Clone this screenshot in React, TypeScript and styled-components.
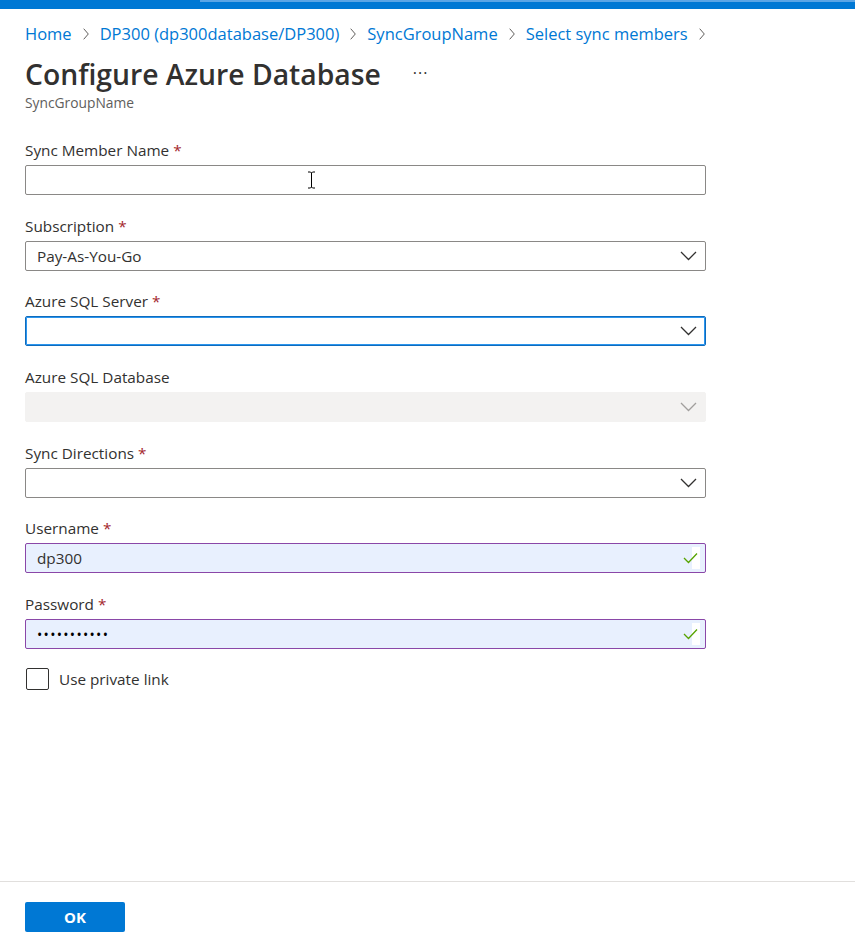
import React from "react";
import styled, { createGlobalStyle, css } from "styled-components";

const Global = createGlobalStyle`
  html, body { margin: 0; padding: 0; background: #fff; }
  body { font-family: "Segoe UI", "Open Sans", "Noto Sans", sans-serif; color: #323130; }
  * { box-sizing: border-box; }
`;

const Page = styled.div`
  min-height: 100vh;
  display: flex;
  flex-direction: column;
`;

const TopBar = styled.div`
  height: 9px;
  background: #0078d4;
  position: relative;
`;

const Progress = styled.div`
  position: absolute;
  left: 200px;
  right: 0;
  top: 0;
  height: 2px;
  background: #5aa5e6;
`;

const Main = styled.div`
  flex: 1;
  padding: 0 25px;
`;

const Crumbs = styled.nav`
  margin-top: 14px;
  height: 22px;
  display: flex;
  align-items: center;
  gap: 11px;
  font-size: 16.5px;
  line-height: 22px;
`;

const Crumb = styled.a`
  color: #0078d4;
  text-decoration: none;
`;

const Sep = styled.span`
  display: inline-flex;
  width: 6px;
  height: 22px;
  align-items: center;
`;

const TitleRow = styled.div`
  margin-top: 9px;
  height: 40px;
  display: flex;
  align-items: center;
  gap: 32px;
`;

const Title = styled.h1`
  margin: 0;
  font-size: 28.3px;
  font-weight: 600;
  line-height: 40px;
  color: #323130;
`;

const More = styled.span`
  font-size: 16px;
  color: #323130;
  letter-spacing: 1px;
  position: relative;
  top: -1px;
`;

const Subtitle = styled.div`
  font-size: 13.8px;
  line-height: 18px;
  color: #605e5c;
`;

const Form = styled.div`
  margin-top: 27px;
  display: flex;
  flex-direction: column;
  gap: 19.7px;
  width: 681px;
`;

const Field = styled.div`
  display: flex;
  flex-direction: column;
`;

const Label = styled.label`
  font-size: 15.3px;
  line-height: 22px;
  height: 22px;
  margin-bottom: 4px;
  color: #323130;
`;

const Req = styled.span`
  color: #a4262c;
  margin-left: 4px;
`;

type Variant = "default" | "focus" | "disabled" | "autofill";

const Box = styled.div<{ $v: Variant }>`
  position: relative;
  height: 30px;
  border-radius: 2px;
  display: flex;
  align-items: center;
  padding: 0 11px;
  font-size: 15.3px;
  color: #323130;
  border: 1px solid #8a8886;
  background: #fff;
  ${(p) =>
    p.$v === "focus" &&
    css`
      border-color: #0f6cbd;
      box-shadow: inset 0 0 0 1px #2b95ee;
    `}
  ${(p) =>
    p.$v === "disabled" &&
    css`
      border-color: #f3f2f1;
      background: #f3f2f1;
    `}
  ${(p) =>
    p.$v === "autofill" &&
    css`
      border-color: #8a47a8;
      background: #e8f0fe;
    `}
`;

const Value = styled.span`
  flex: 1;
`;

const Dots = styled.span`
  flex: 1;
  font-size: 14px;
  letter-spacing: 1.3px;
  color: #000;
`;

const IconSlot = styled.span`
  position: absolute;
  right: 8px;
  top: 0;
  bottom: 0;
  display: flex;
  align-items: center;
`;

const CheckSlot = styled.span`
  position: absolute;
  right: 5px;
  top: 3px;
  bottom: 3px;
  width: 17px;
  display: flex;
  align-items: center;
  justify-content: flex-start;
  background: linear-gradient(to right, transparent 0 9px, #fff 9px);
`;

const Cursor = styled.span`
  position: absolute;
  left: 281px;
  top: 5px;
  display: flex;
`;

const CheckRow = styled.div`
  margin-top: -1.5px;
  display: flex;
  align-items: center;
  gap: 10px;
  height: 24px;
  font-size: 15.3px;
  color: #323130;
`;

const CheckBox = styled.span`
  width: 23px;
  height: 22px;
  border: 1px solid #323130;
  border-radius: 2px;
  margin-left: 1px;
`;

const Footer = styled.footer`
  border-top: 1px solid #e1dfdd;
  padding: 20px 25px;
`;

const OkButton = styled.button`
  width: 100px;
  height: 30px;
  border: none;
  border-radius: 2px;
  background: #0078d4;
  color: #fff;
  font-family: inherit;
  font-size: 15px;
  font-weight: 700;
  cursor: pointer;
`;

const Chevron = ({ color = "#323130" }: { color?: string }) => (
  <svg width="17" height="10" viewBox="0 0 17 10">
    <path d="M1 1 L8.5 8.5 L16 1" fill="none" stroke={color} strokeWidth="1.3" />
  </svg>
);

const CrumbSep = () => (
  <Sep>
    <svg width="6" height="12" viewBox="0 0 6 12">
      <path d="M0.7 0.7 L5.3 6 L0.7 11.3" fill="none" stroke="#605e5c" strokeWidth="1" />
    </svg>
  </Sep>
);

const Check = () => (
  <svg width="15" height="12" viewBox="0 0 15 12">
    <path d="M1 6 L5.5 10.5 L14 1.5" fill="none" stroke="#57a300" strokeWidth="1.3" />
  </svg>
);

const IBeam = () => (
  <svg width="9" height="18" viewBox="0 0 9 18">
    <path d="M1 1 H3.5 L4.5 2 L5.5 1 H8 M4.5 2 V16 M1 17 H3.5 L4.5 16 L5.5 17 H8" fill="none" stroke="#000" strokeWidth="1" />
  </svg>
);

const Req1 = () => <Req>*</Req>;

export default function App() {
  return (
    <>
      <Global />
      <Page>
        <TopBar>
          <Progress />
        </TopBar>
        <Main>
          <Crumbs>
            <Crumb>Home</Crumb>
            <CrumbSep />
            <Crumb>DP300 (dp300database/DP300)</Crumb>
            <CrumbSep />
            <Crumb>SyncGroupName</Crumb>
            <CrumbSep />
            <Crumb>Select sync members</Crumb>
            <CrumbSep />
          </Crumbs>
          <TitleRow>
            <Title>Configure Azure Database</Title>
            <More>···</More>
          </TitleRow>
          <Subtitle>SyncGroupName</Subtitle>
          <Form>
            <Field>
              <Label>
                Sync Member Name<Req1 />
              </Label>
              <Box $v="default">
                <Cursor>
                  <IBeam />
                </Cursor>
              </Box>
            </Field>
            <Field>
              <Label>
                Subscription<Req1 />
              </Label>
              <Box $v="default">
                <Value>Pay-As-You-Go</Value>
                <IconSlot>
                  <Chevron />
                </IconSlot>
              </Box>
            </Field>
            <Field>
              <Label>
                Azure SQL Server<Req1 />
              </Label>
              <Box $v="focus">
                <IconSlot>
                  <Chevron />
                </IconSlot>
              </Box>
            </Field>
            <Field>
              <Label>Azure SQL Database</Label>
              <Box $v="disabled">
                <IconSlot>
                  <Chevron color="#a19f9d" />
                </IconSlot>
              </Box>
            </Field>
            <Field>
              <Label>
                Sync Directions<Req1 />
              </Label>
              <Box $v="default">
                <IconSlot>
                  <Chevron />
                </IconSlot>
              </Box>
            </Field>
            <Field>
              <Label>
                Username<Req1 />
              </Label>
              <Box $v="autofill">
                <Value>dp300</Value>
                <CheckSlot>
                  <Check />
                </CheckSlot>
              </Box>
            </Field>
            <Field>
              <Label>
                Password<Req1 />
              </Label>
              <Box $v="autofill">
                <Dots>•••••••••••</Dots>
                <CheckSlot>
                  <Check />
                </CheckSlot>
              </Box>
            </Field>
            <CheckRow>
              <CheckBox />
              Use private link
            </CheckRow>
          </Form>
        </Main>
        <Footer>
          <OkButton>OK</OkButton>
        </Footer>
      </Page>
    </>
  );
}
